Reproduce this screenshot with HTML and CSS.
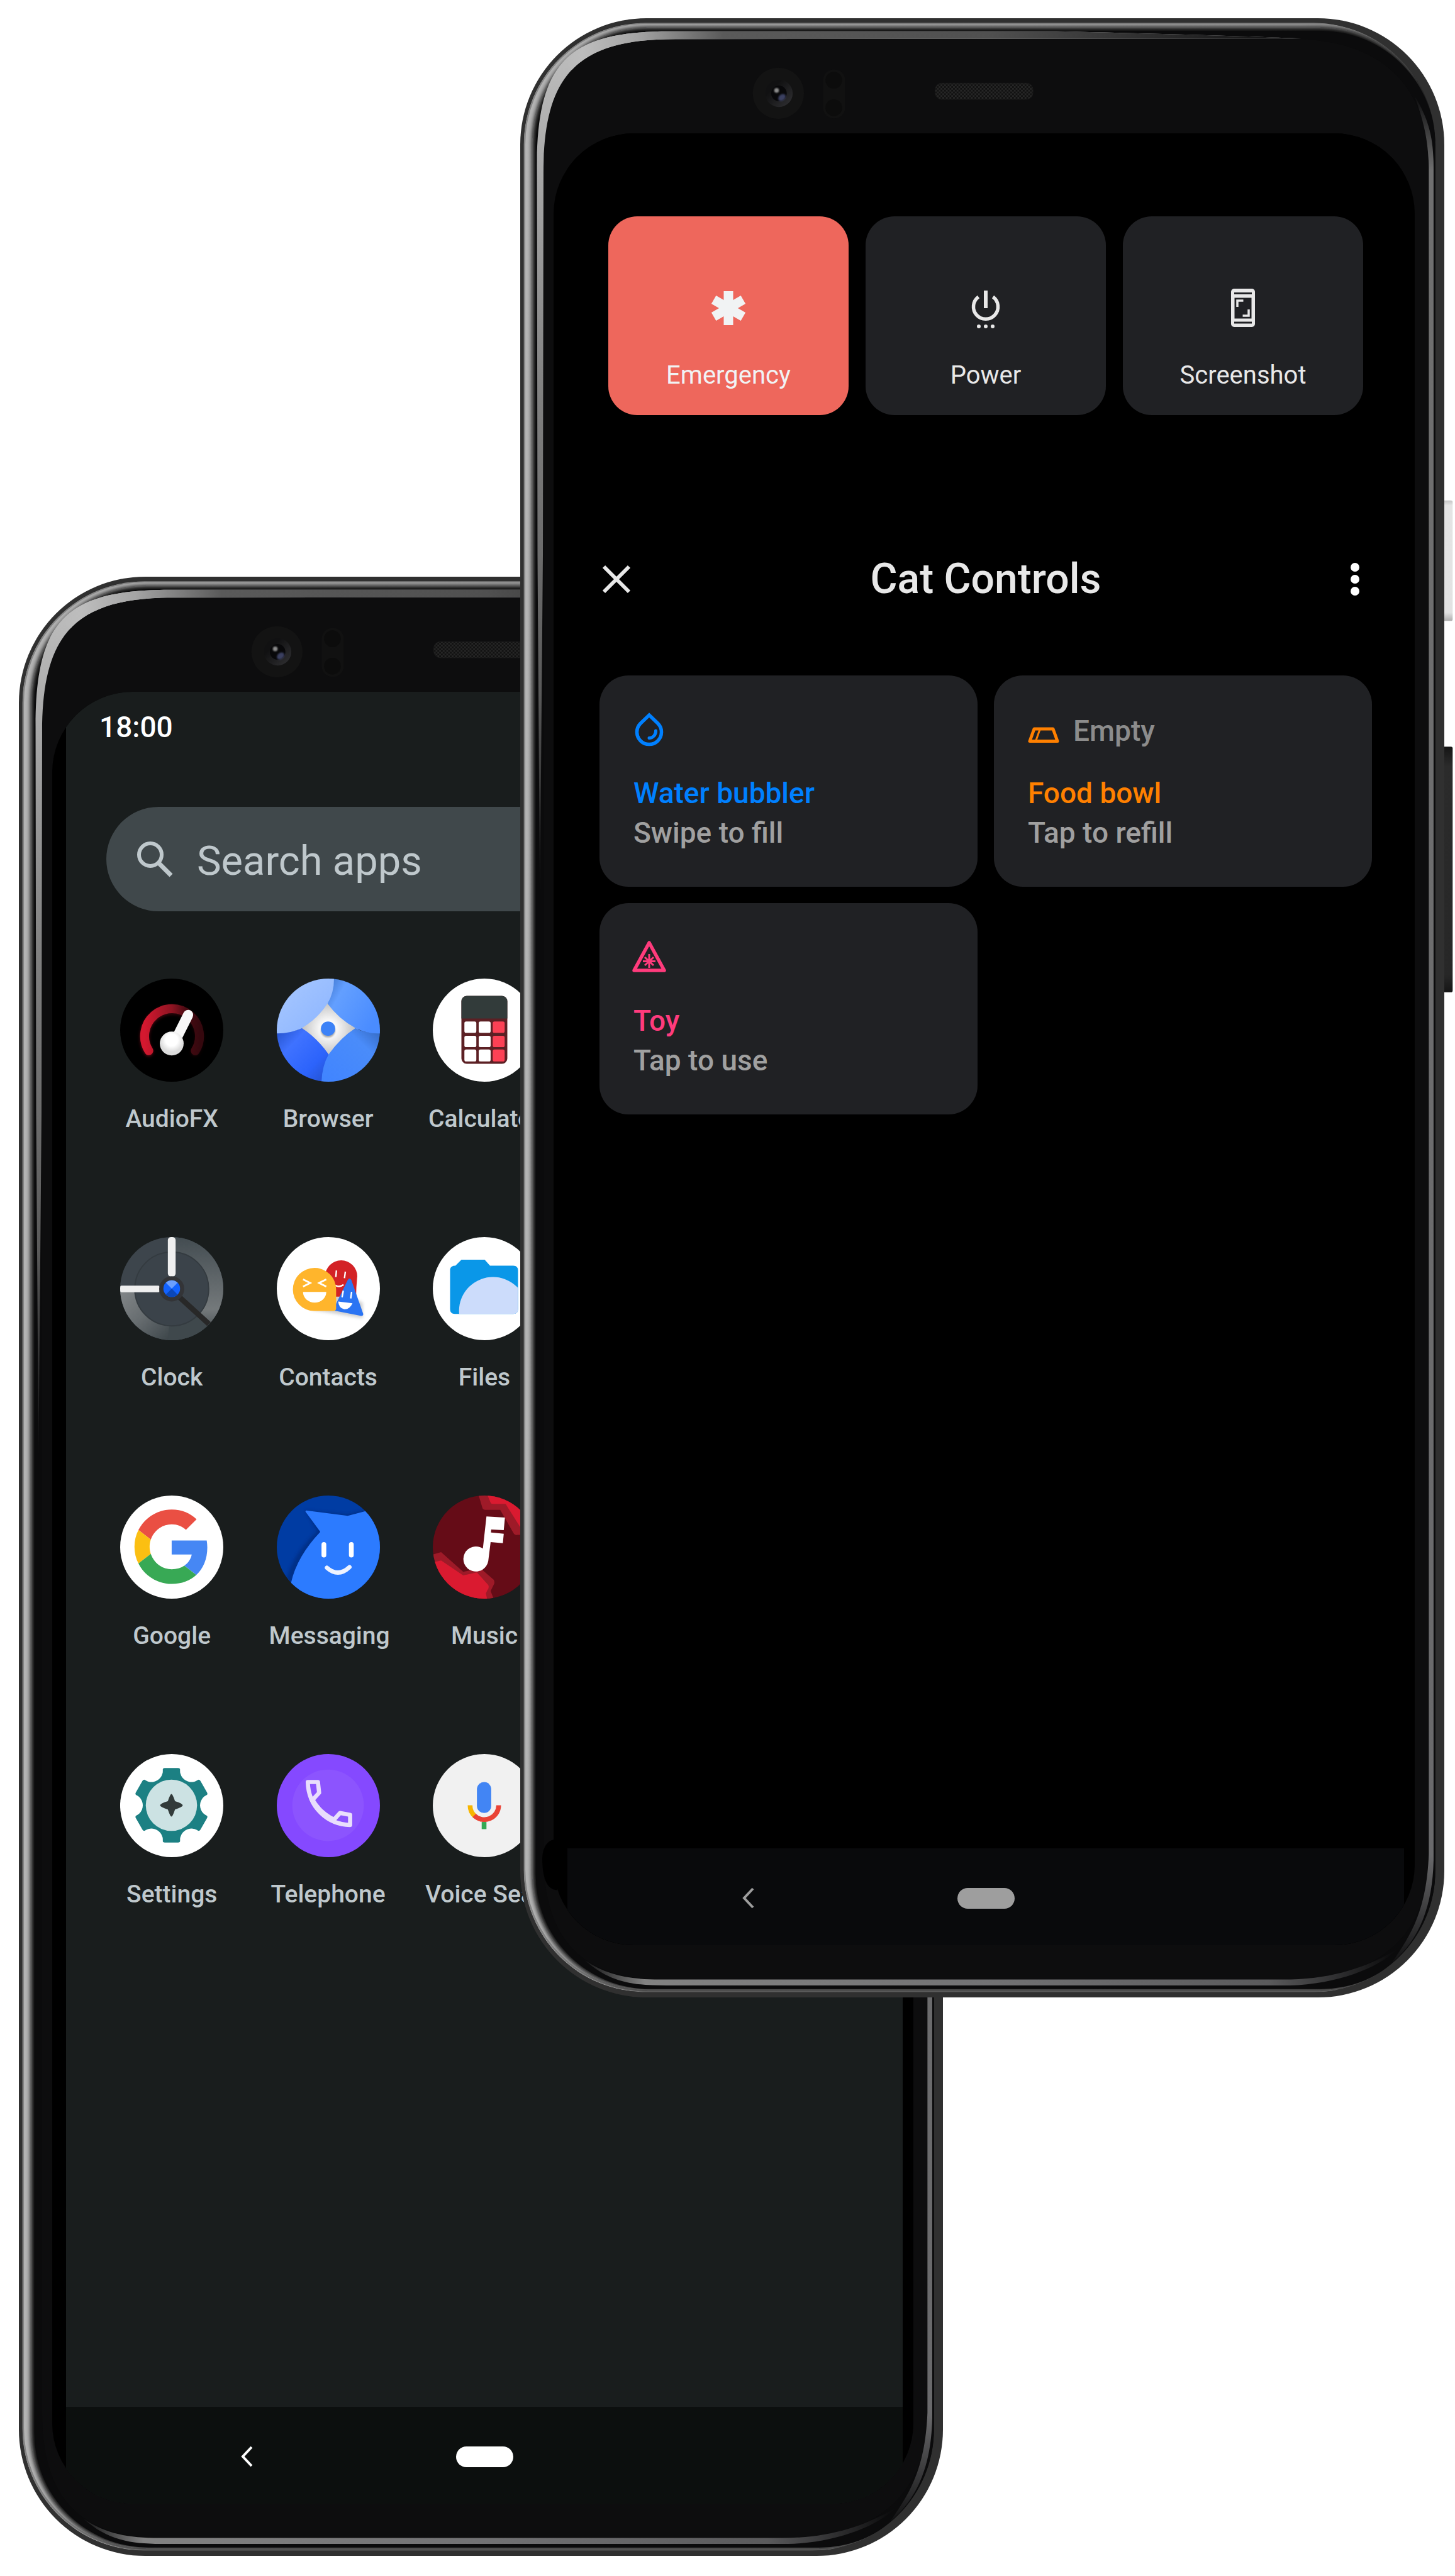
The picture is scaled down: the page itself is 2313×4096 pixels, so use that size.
FILE: index.html
```html
<!DOCTYPE html>
<html lang="en">
<head>
<meta charset="utf-8">
<meta name="viewport" content="width=device-width, initial-scale=1">
<title>Cat Controls</title>
<link rel="stylesheet" href="styles.css">
</head>
<body>
<svg class="defs" aria-hidden="true">
  <defs>
    <linearGradient id="rim" x1="0" x2="1" y1="0" y2="0">
      <stop offset="0" stop-color="#b4b4b4"/><stop offset=".85" stop-color="#9a9a9a"/><stop offset=".97" stop-color="#777"/><stop offset="1" stop-color="#0a0a0a"/>
    </linearGradient>
    <linearGradient id="sheenTop" gradientUnits="userSpaceOnUse" x1="0" y1="0" x2="1310" y2="0">
      <stop offset="0" stop-color="#b4b4b4"/><stop offset=".08" stop-color="#bdbdbd"/><stop offset=".15" stop-color="#a4a4a4"/><stop offset=".26" stop-color="#5a5a5a"/><stop offset=".6" stop-color="#505050"/><stop offset="1" stop-color="#0d0d0e"/>
    </linearGradient>
    <linearGradient id="sheenLeft" gradientUnits="userSpaceOnUse" x1="0" y1="80" x2="0" y2="1480">
      <stop offset="0" stop-color="#bababa"/><stop offset=".4" stop-color="#808080"/><stop offset=".75" stop-color="#5a5a5a"/><stop offset="1" stop-color="#0d0d0e"/>
    </linearGradient>
    <linearGradient id="sheenRight" gradientUnits="userSpaceOnUse" x1="0" y1="130" x2="0" y2="3270">
      <stop offset="0" stop-color="#0d0d0e"/><stop offset=".04" stop-color="#707070"/><stop offset=".94" stop-color="#6a6a6c"/><stop offset="1" stop-color="#0d0d0e"/>
    </linearGradient>
    <linearGradient id="sheenBottom" gradientUnits="userSpaceOnUse" x1="100" y1="0" x2="1460" y2="0">
      <stop offset="0" stop-color="#0d0d0e"/><stop offset=".08" stop-color="#828282"/><stop offset=".5" stop-color="#727274"/><stop offset=".85" stop-color="#5a5a5c"/><stop offset="1" stop-color="#0d0d0e"/>
    </linearGradient>
    <linearGradient id="lens" x1="0" y1="0" x2="1" y2="1"><stop offset=".3" stop-color="#111112"/><stop offset="1" stop-color="#323235"/></linearGradient>
    <pattern id="mesh" width="6" height="6" patternUnits="userSpaceOnUse"><rect width="6" height="6" fill="#111"/><rect width="3" height="3" fill="#262626"/><rect x="3" y="3" width="3" height="3" fill="#262626"/></pattern>
    <filter id="soft3" x="-5%" y="-5%" width="110%" height="110%"><feGaussianBlur stdDeviation="4"/></filter>
    <filter id="soft1" x="-20%" y="-20%" width="140%" height="140%"><feGaussianBlur stdDeviation="1"/></filter>
    <filter id="glow" x="-30%" y="-30%" width="160%" height="160%"><feGaussianBlur stdDeviation="3"/></filter>
    <clipPath id="rimClip"><rect x="6" y="8" width="1529" height="3303" rx="204"/></clipPath>
    <clipPath id="topHalf"><path d="M0 0H1400V120H120Z"/></clipPath>
    <clipPath id="disc"><circle cx="86.5" cy="86.5" r="86.5"/></clipPath>
    <path id="sheenShape" d="M33 1480 L29 900 28 250 C28 77 77 22 250 22 H900 Q1200 29 1310 34 L260 35 C95 35 39 95 39 260 L38 900Z"/>
    <symbol id="shell" viewBox="0 0 1550 3320" preserveAspectRatio="none">
      <rect width="1550" height="3320" rx="212" fill="#303030"/>
      <g clip-path="url(#rimClip)">
        <rect x="6" y="8" width="1529" height="3303" rx="204" fill="url(#rim)"/>
        <rect x="7" y="8" width="1600" height="3301" rx="204" fill="none" stroke="#858585" stroke-width="3"/>
        <rect x="20" y="15" width="1515" height="3293" rx="194" fill="#0a0a0b" filter="url(#soft3)"/>
        <rect x="26" y="21" width="1509" height="3285" rx="192" fill="#0b0b0c"/>
      </g>
      <path d="M39 260 C39 95 95 35 260 35 H1300 C1440 36 1524 110 1524 250 V3080 C1524 3215 1440 3290 1290 3290 H240 C100 3290 39 3220 39 3080Z" fill="#0d0d0e"/>
      <use href="#sheenShape" fill="url(#sheenLeft)"/>
      <use href="#sheenShape" fill="url(#sheenTop)" clip-path="url(#topHalf)"/>
      <path d="M1500 130 C1524 170 1532 200 1532 250 V3090 C1530 3180 1500 3230 1462 3262 C1490 3220 1520 3180 1524 3080 V250 C1523 200 1514 170 1500 130Z" fill="url(#sheenRight)"/>
      <path d="M109 3258 C150 3295 190 3300 245 3300 H1290 C1370 3298 1440 3270 1470 3240 C1410 3275 1350 3290 1280 3290 H235 C185 3290 145 3283 109 3258Z" fill="url(#sheenBottom)"/>
      <circle cx="433" cy="126" r="43" fill="#131313"/>
      <circle cx="434" cy="126" r="23" fill="url(#lens)"/>
      <circle cx="434" cy="126" r="13" fill="#08080a"/>
      <ellipse cx="439" cy="133" rx="7" ry="5" fill="#3b3f60" transform="rotate(-40 439 133)" filter="url(#soft1)"/>
      <circle cx="430" cy="121" r="4" fill="#8c8c8c" filter="url(#soft1)"/>
      <rect x="508" y="86" width="37" height="82" rx="18" fill="#111"/>
      <circle cx="526" cy="104" r="14" fill="#0c0c0c"/><circle cx="526" cy="150" r="14" fill="#0c0c0c"/>
      <rect x="696" y="109" width="164" height="27" rx="11" fill="url(#mesh)" stroke="#1c1c1c" stroke-width="1"/>
    </symbol>
  </defs>
</svg>

<main class="stage">
  <section class="phone phone-back">
    <svg class="shell" viewBox="0 0 1550 3320" preserveAspectRatio="none" aria-hidden="true"><use href="#shell" width="1550" height="3320"/></svg>
    <div class="glass">
      <div class="screen drawer">
        <div class="status"><time>18:00</time></div>
        <label class="search">
          <svg class="search-icon" viewBox="0 0 57 57" aria-hidden="true"><circle cx="21" cy="21" r="18" fill="none" stroke="currentColor" stroke-width="6"/><path d="M34 34 54 54" stroke="currentColor" stroke-width="7"/></svg>
          <input type="text" placeholder="Search apps">
        </label>
        <ul class="apps">
          <li><a class="app" href="#audiofx">
            <svg viewBox="0 0 173 173" aria-hidden="true">
              <defs><linearGradient id="fx"><stop offset="0" stop-color="#d4182f"/><stop offset=".5" stop-color="#8e1422"/><stop offset=".75" stop-color="#4a0a12"/><stop offset="1" stop-color="#35080e"/></linearGradient>
              <radialGradient id="knob" cy=".35"><stop offset=".5" stop-color="#fff"/><stop offset="1" stop-color="#dcdcdc"/></radialGradient></defs>
              <circle cx="86.500" cy="86.500" r="86.500" fill="#000"/>
              <path d="M48 123 A46 46 0 1 1 126 123" fill="none" stroke="url(#fx)" stroke-width="15" stroke-linecap="round" opacity=".4" filter="url(#glow)"/>
              <path d="M48 121 A46 46 0 1 1 126 121" fill="none" stroke="url(#fx)" stroke-width="15" stroke-linecap="round"/>
              <path d="M95 99 114 61" stroke="#f8f8f8" stroke-width="17" stroke-linecap="round"/>
              <circle cx="86.500" cy="109" r="20" fill="url(#knob)"/>
            </svg><span class="label">AudioFX</span></a></li>
          <li><a class="app" href="#browser">
            <svg viewBox="0 0 173 173" aria-hidden="true">
              <defs>
                <radialGradient id="br0"><stop offset=".2" stop-color="#fff"/><stop offset="1" stop-color="#b8b8b8"/></radialGradient>
                <linearGradient id="br1" x1="0" y1="0" x2="1" y2="1"><stop offset="0" stop-color="#a8c8ff"/><stop offset="1" stop-color="#8bb4ff"/></linearGradient>
                <linearGradient id="br2" x1="0" y1="0" x2="1" y2=".6"><stop offset="0" stop-color="#3d74cc"/><stop offset=".3" stop-color="#639fff"/><stop offset="1" stop-color="#4a8cff"/></linearGradient>
                <linearGradient id="br3" x1="0" y1="0" x2="1" y2="1"><stop offset="0" stop-color="#2350c8"/><stop offset=".3" stop-color="#3f72ff"/><stop offset=".7" stop-color="#2c63fb"/><stop offset="1" stop-color="#2450c9"/></linearGradient>
                <linearGradient id="br4" x1="1" y1="0" x2="0" y2="1"><stop offset="0" stop-color="#3367bd"/><stop offset=".3" stop-color="#4a8cfa"/><stop offset="1" stop-color="#4084ff"/></linearGradient>
              </defs>
              <g clip-path="url(#disc)">
                <circle cx="86.500" cy="84" r="50" fill="url(#br0)"/>
                <path d="M0 86 Q24 92 42 83 Q66 98 87 127 L76 173 H0Z" fill="url(#br3)"/>
                <path d="M173 88 Q152 94 132 83 Q108 98 87 127 Q76 146 75 173 H173Z" fill="url(#br4)"/>
                <path d="M90 0 V30 L85 42 Q104 68 132 83 Q152 93 173 92 V0Z" fill="url(#br2)"/>
                <path d="M96 0 Q96 24 85 42 Q68 68 42 83 Q24 92 0 92 V0Z" fill="url(#br1)"/>
              </g>
              <circle cx="86" cy="87" r="12" fill="#777" opacity=".6" filter="url(#soft1)"/><circle cx="86" cy="84" r="12" fill="#3c82f7"/>
            </svg><span class="label">Browser</span></a></li>
          <li><a class="app" href="#calculator">
            <svg viewBox="0 0 173 173" aria-hidden="true">
              <circle cx="86.500" cy="86.500" r="86.500" fill="#fff"/>
              <rect x="48" y="29" width="77" height="114" rx="9" fill="#5c2024"/>
              <path d="M48 67 V38 a9 9 0 0 1 9-9 H116 a9 9 0 0 1 9 9 V67Z" fill="#323b3a"/>
              <g fill="#fff"><rect x="53" y="72" width="20" height="19" rx="3"/><rect x="77" y="72" width="20" height="19" rx="3"/><rect x="53" y="96" width="20" height="19" rx="3"/><rect x="77" y="96" width="20" height="19" rx="3"/><rect x="53" y="119" width="20" height="20" rx="3"/><rect x="77" y="119" width="20" height="20" rx="3"/></g>
              <g fill="#fc4155"><rect x="100.500" y="72" width="20" height="19" rx="3"/><rect x="100.500" y="96" width="20" height="19" rx="3"/><rect x="100.500" y="119" width="20" height="20" rx="3"/></g>
            </svg><span class="label">Calculator</span></a></li>

          <li><a class="app" href="#clock">
            <svg viewBox="0 0 173 173" aria-hidden="true">
              <defs>
                <linearGradient id="ck1" x1="0" y1="0" x2="0" y2="1"><stop offset="0" stop-color="#434c51"/><stop offset=".7" stop-color="#74797b"/><stop offset="1" stop-color="#3a4347"/></linearGradient>
                <linearGradient id="ck2" x1="0" y1="0" x2="1" y2="1"><stop offset="0" stop-color="#84888a"/><stop offset=".5" stop-color="#666c6f"/><stop offset="1" stop-color="#3a4347"/></linearGradient>
              </defs>
              <g clip-path="url(#disc)">
                <rect width="173" height="173" fill="#3d454c"/>
                <rect x="86" width="87" height="173" fill="url(#ck1)"/>
                <path d="M0 86 H87 V173 H0Z" fill="url(#ck2)"/>
                <path d="M87 87 152 147 126 173 H80Z" fill="#3f484c"/>
                <circle cx="86.500" cy="87" r="62" fill="#3b434a" stroke="#343b40" stroke-width="2"/>
                <path d="M92 94 149 146" stroke="#282828" stroke-width="9"/>
                <path d="M86 0 V66" stroke="#222" stroke-width="15" opacity=".4" filter="url(#soft1)"/>
                <rect x="80" y="0" width="13" height="66" rx="5" fill="#efefef"/><rect x="0" y="81.500" width="66" height="11" rx="2" fill="#efefef"/>
              </g>
              <circle cx="86.500" cy="87" r="21" fill="#333437"/>
              <circle cx="86.500" cy="86.500" r="14" fill="#1262ff"/>
              <path d="M86.500 86.500 76.600 76.600 A14 14 0 0 1 96.400 76.600Z" fill="#6b9fff"/><path d="M86.500 86.500 76.600 96.400 A14 14 0 0 0 96.400 96.400Z" fill="#0b47b8"/>
            </svg><span class="label">Clock</span></a></li>
          <li><a class="app" href="#contacts">
            <svg viewBox="0 0 173 173" aria-hidden="true">
              <circle cx="86.500" cy="86.500" r="86.500" fill="#fff"/>
              <path d="M60 122 L144 136 V110 L100 90 30 100Z" fill="#777" opacity=".35" filter="url(#glow)"/>
              <path d="M81 66 a27 27 0 0 1 54 0 Q133 84 133 100 L96 100Z" fill="#d32226"/>
              <path d="M100 56 99 67 M115 58 113.500 69 M98 81 Q105 85 112 80" fill="none" stroke="#fff" stroke-width="2.500"/>
              <path d="M119 72 Q122 67 125 72 L145 129 Q145 133 141 132 L94 123Z" fill="#2b74f3"/>
              <path d="M111.500 90 109.500 101 M125.500 92 124 103" stroke="#fff" stroke-width="2.500"/>
              <path d="M103 108 127 111 Q122 122 113 121 Q104 119 103 108Z" fill="#fff"/>
              <path d="M27 88 a36 36 0 0 1 72.500 0 V120 Q99 124 95 124 H63 A36 36 0 0 1 27 88Z" fill="#ffb52c"/>
              <path d="M44 71 56 77 44 83 M83 71 71 77 83 83" fill="none" stroke="#fff" stroke-width="3"/>
              <path d="M44 92 H83 A19.500 18 0 0 1 44 92Z" fill="#fff"/>
            </svg><span class="label">Contacts</span></a></li>
          <li><a class="app" href="#files">
            <svg viewBox="0 0 173 173" aria-hidden="true">
              <defs><clipPath id="folder"><path id="folderShape" d="M29 54 Q30 48 38 48 L48 38 H87 L96 48 H135 Q143 48 143 56 V121 Q143 129 135 129 H37 Q29 129 29 121Z"/></clipPath></defs>
              <circle cx="86.500" cy="86.500" r="86.500" fill="#fff"/>
              <use href="#folderShape" fill="#0a97e8"/>
              <circle cx="101" cy="124" r="57" fill="#ccdcfb" clip-path="url(#folder)"/>
            </svg><span class="label">Files</span></a></li>

          <li><a class="app" href="#google">
            <svg viewBox="0 0 173 173" aria-hidden="true">
              <circle cx="86.500" cy="86.500" r="86.500" fill="#fff"/>
              <g transform="translate(24 23.500) scale(2.600)">
                <path fill="#ea4f43" d="M24 9.500c3.540 0 6.710 1.220 9.210 3.600l6.850-6.850C35.900 2.380 30.470 0 24 0 14.620 0 6.510 5.380 2.560 13.220l7.980 6.190C12.430 13.720 17.740 9.500 24 9.500z"/>
                <path fill="#4687f4" d="M46.980 24.550c0-1.570-.15-3.090-.38-4.550H24v9.020h12.940c-.58 2.960-2.260 5.480-4.780 7.180l7.730 6c4.510-4.180 7.090-10.360 7.090-17.650z"/>
                <path fill="#fbbf12" d="M10.530 28.590c-.48-1.450-.76-2.990-.76-4.590s.27-3.140.76-4.590l-7.980-6.190C.92 16.460 0 20.120 0 24c0 3.880.92 7.540 2.560 10.780l7.970-6.190z"/>
                <path fill="#38a955" d="M24 48c6.480 0 11.930-2.130 15.890-5.810l-7.730-6c-2.150 1.450-4.920 2.300-8.160 2.300-6.260 0-11.570-4.220-13.470-9.910l-7.980 6.190C6.510 42.620 14.620 48 24 48z"/>
              </g>
            </svg><span class="label">Google</span></a></li>
          <li><a class="app" href="#messaging">
            <svg viewBox="0 0 173 173" aria-hidden="true">
              <g clip-path="url(#disc)">
                <rect width="173" height="173" fill="#003ca3"/>
                <path d="M48 25 119 32 150 24 V60 H78 Q34 108 24 150 L16 140 Q30 94 68 60Z" fill="#002a7c" opacity=".7" filter="url(#glow)"/>
                <path d="M49 25 119 34 149 26 180 60 V173 H24 V146 Q34 102 73 61 L48 27Z" fill="#2c7bff"/>
              </g>
              <path d="M79 82 V100 M125 82 V100" stroke="#fff" stroke-width="8" stroke-linecap="round"/>
              <path d="M84 121 Q103 138 122 120" fill="none" stroke="#eef3ff" stroke-width="7" stroke-linecap="round"/>
            </svg><span class="label">Messaging</span></a></li>
          <li><a class="app" href="#music">
            <svg viewBox="0 0 173 173" aria-hidden="true">
              <g clip-path="url(#disc)">
                <rect width="173" height="173" fill="#650c17"/>
                <path d="M77 0 83 20 Q84 24 88 24 H113 L136 64 Q138 67 142 66 H173 V0Z" fill="#9e1a28"/>
                <path d="M92 0 97 12 Q98 14 101 14 H122 L146 52 173 70 V0Z" fill="#da1a30"/>
                <path d="M0 99 14 95 51 128 80 122 102 141 Q104 144 103 148 L97 160 102 173 H0Z" fill="#9e1a28"/>
                <path d="M0 112 14 109 51 134 74 129 93 150 Q95 154 92 158 L89 164 91 173 H0Z" fill="#da1a30"/>
              </g>
              <path d="M90 35 121 37 119 58 98 57 97.500 62 119 64 117.500 80 97 78 93 110 A21 21 0 1 1 84 89Z" fill="#fff"/>
            </svg><span class="label">Music</span></a></li>

          <li><a class="app" href="#settings">
            <svg viewBox="0 0 173 173" aria-hidden="true">
              <defs><g id="tooth"><rect x="-15" y="-62.500" width="30" height="40" rx="4"/></g><circle id="notch" cy="-67" r="19"/></defs>
              <circle cx="86.500" cy="86.500" r="86.500" fill="#fff"/>
              <g transform="translate(86 86)">
                <g fill="#1c8083"><circle r="56"/><use href="#tooth"/><use href="#tooth" transform="rotate(60)"/><use href="#tooth" transform="rotate(120)"/><use href="#tooth" transform="rotate(180)"/><use href="#tooth" transform="rotate(240)"/><use href="#tooth" transform="rotate(300)"/></g>
                <g fill="#fff"><use href="#notch" transform="rotate(30)"/><use href="#notch" transform="rotate(90)"/><use href="#notch" transform="rotate(150)"/><use href="#notch" transform="rotate(210)"/><use href="#notch" transform="rotate(270)"/><use href="#notch" transform="rotate(330)"/></g>
                <circle r="43" fill="#cce2e3"/>
                <path d="M0 -19 Q2 -19 6 -7 Q19 -3 19 0 Q19 3 6 7 Q2 19 0 19 Q-2 19 -6 7 Q-19 3 -19 0 Q-19 -3 -6 -7 Q-2 -19 0 -19Z" fill="#323b3a"/>
              </g>
            </svg><span class="label">Settings</span></a></li>
          <li><a class="app" href="#telephone">
            <svg viewBox="0 0 173 173" aria-hidden="true">
              <circle cx="86.500" cy="86.500" r="86.500" fill="#8549ff"/><circle cx="86" cy="86" r="60" fill="#8c54fe"/>
              <path d="M52 47 H69 L71 65 60 77 Q72 98 96 110 L106 99 123 102 V119 C84 118 53 88 52 47Z" fill="none" stroke="#e9defc" stroke-width="7" stroke-linejoin="round"/>
              <path d="M57 74 Q68 101 97 113" fill="none" stroke="#e9defc" stroke-width="6"/>
            </svg><span class="label">Telephone</span></a></li>
          <li><a class="app" href="#voice">
            <svg viewBox="0 0 173 173" aria-hidden="true">
              <circle cx="86.500" cy="86.500" r="86.500" fill="#f1f1f1"/>
              <rect x="74" y="47" width="24" height="52" rx="12" fill="#4285f4"/>
              <path d="M62.500 86 A24 24 0 0 0 71 104.500" fill="none" stroke="#f7b500" stroke-width="8"/>
              <path d="M69.500 103 A24 24 0 0 0 110.500 86" fill="none" stroke="#ea4335" stroke-width="8"/>
              <rect x="82" y="114" width="8" height="12" fill="#34a853"/>
            </svg><span class="label">Voice Search</span></a></li>
        </ul>
        <nav class="navbar">
          <button class="nav-back" aria-label="Back"><svg viewBox="0 0 20 34" aria-hidden="true"><path d="M18 2 4 17 18 32" fill="none" stroke="currentColor" stroke-width="4"/></svg></button>
          <button class="nav-home" aria-label="Home"></button>
        </nav>
      </div>
    </div>
  </section>

  <section class="phone phone-front">
    <svg class="shell" viewBox="0 0 1550 3320" preserveAspectRatio="none" aria-hidden="true">
      <defs>
        <linearGradient id="keyLight" x1="0" y1="0" x2="0" y2="1"><stop offset="0" stop-color="#c4c4c4"/><stop offset=".04" stop-color="#e4e4e4"/><stop offset=".93" stop-color="#e2e2e2"/><stop offset="1" stop-color="#adadad"/></linearGradient>
        <linearGradient id="keyDark" x1="0" y1="0" x2="0" y2="1"><stop offset="0" stop-color="#151515"/><stop offset=".08" stop-color="#2b2b2b"/><stop offset=".93" stop-color="#272727"/><stop offset="1" stop-color="#151515"/></linearGradient>
      </defs>
      <rect x="1540" y="809" width="24" height="202" rx="3" fill="url(#keyLight)"/>
      <rect x="1540" y="1222" width="24" height="412" rx="3" fill="url(#keyDark)"/>
      <use href="#shell" width="1550" height="3320"/>
      <path d="M60 3055 C45 3055 37 3070 37 3088 C37 3120 45 3140 62 3140Z" fill="#000"/>
    </svg>
    <div class="glass">
      <div class="screen controls">
        <div class="power-row">
          <button class="power-card emergency">
            <svg viewBox="0 0 64 64" aria-hidden="true"><g fill="#f1f3f4" transform="translate(32 32)"><rect x="-7.500" y="-27" width="15" height="54"/><rect x="-7.500" y="-27" width="15" height="54" transform="rotate(60)"/><rect x="-7.500" y="-27" width="15" height="54" transform="rotate(120)"/></g></svg>
            <span>Emergency</span></button>
          <button class="power-card">
            <svg viewBox="0 0 64 64" aria-hidden="true"><path d="M20.500 14 A19.500 19.500 0 1 0 43.500 14" fill="none" stroke="currentColor" stroke-width="5.500"/><path d="M32 4 V32" stroke="currentColor" stroke-width="6"/><g fill="currentColor"><circle cx="21" cy="61" r="3"/><circle cx="32" cy="61" r="3"/><circle cx="43" cy="61" r="3"/></g></svg>
            <span>Power</span></button>
          <button class="power-card">
            <svg viewBox="0 0 64 64" aria-hidden="true"><rect x="13" y="1" width="38" height="61" rx="5" fill="currentColor"/><path d="M18 8.500 H46 M18 55 H46" stroke="#202124" stroke-width="3"/><rect x="18.500" y="15.500" width="27" height="33" fill="#202124"/><path d="M23 30 V20 H32.500 M41 34 V44 H31.500" fill="none" stroke="currentColor" stroke-width="3.500"/></svg>
            <span>Screenshot</span></button>
        </div>
        <header class="head">
          <button class="icon-btn" aria-label="Close"><svg viewBox="0 0 44 44" aria-hidden="true"><path d="M2 2 42 42 M42 2 2 42" stroke="#e8e8e8" stroke-width="6"/></svg></button>
          <h1>Cat Controls</h1>
          <button class="icon-btn" aria-label="More"><svg viewBox="0 0 44 44" aria-hidden="true"><g fill="#fff"><circle cx="22" cy="3" r="7"/><circle cx="22" cy="22" r="7"/><circle cx="22" cy="41" r="7"/></g></svg></button>
        </header>
        <div class="tiles">
          <button class="tile water">
            <span class="tile-top"><svg viewBox="0 0 50 54" aria-hidden="true"><path d="M25 2 39 15.500 A19.500 19.500 0 1 1 11 15.500Z" fill="none" stroke="currentColor" stroke-width="5.500"/><path d="M35.500 27 A10.500 11 0 0 1 25 38.500" fill="none" stroke="currentColor" stroke-width="5" stroke-linecap="round"/></svg></span>
            <strong>Water bubbler</strong><span>Swipe to fill</span></button>
          <button class="tile food">
            <span class="tile-top"><svg viewBox="0 0 50 54" aria-hidden="true"><path d="M3 43.500 H47 L40 24 H10Z" fill="none" stroke="currentColor" stroke-width="5" stroke-linejoin="round"/><path d="M19 25 13 42" stroke="currentColor" stroke-width="3"/></svg><em>Empty</em></span>
            <strong>Food bowl</strong><span>Tap to refill</span></button>
          <button class="tile toy">
            <span class="tile-top"><svg viewBox="0 0 50 54" aria-hidden="true"><path d="M25 2 49 46 H1Z" fill="none" stroke="currentColor" stroke-width="5.500" stroke-linejoin="round"/><path d="M25 20 V42 M15 31.500 H35 M18 25 32 38 M32 25 18 38" stroke="currentColor" stroke-width="3"/></svg></span>
            <strong>Toy</strong><span>Tap to use</span></button>
        </div>
        <nav class="navbar">
          <button class="nav-back" aria-label="Back"><svg viewBox="0 0 20 34" aria-hidden="true"><path d="M18 2 4 17 18 32" fill="none" stroke="currentColor" stroke-width="4"/></svg></button>
          <button class="nav-home" aria-label="Home"></button>
        </nav>
      </div>
    </div>
  </section>
</main>
</body>
</html>
```
FILE: styles.css
```css
* {
  box-sizing: border-box;
}

body {
  margin: 0;
  background: #fff;
  font-family: Roboto, "Noto Sans", sans-serif;
}

button {
  margin: 0;
  padding: 0;
  border: 0;
  background: none;
  color: inherit;
  font: inherit;
  text-align: inherit;
}

svg {
  display: block;
  overflow: visible;
}

.defs {
  position: absolute;
  width: 0;
  height: 0;
}

/* Two phones share a three-column grid and overlap in the middle column */
.stage {
  display: grid;
  grid-template-columns: 797fr 672fr 797fr;
  padding: 29px 17px 32px 30px;
  overflow: hidden;
}

.phone {
  position: relative;
  display: flex;
  grid-row: 1;
  align-self: start;
  aspect-ratio: 1469 / 3147;
  padding: 183px 47px 83px 53px;
}

.phone-back {
  grid-column: 1 / 3;
  margin-top: 888px;
}

.phone-front {
  grid-column: 2 / 4;
}

.shell {
  position: absolute;
  inset: 0;
  width: 100%;
  height: 100%;
}

.glass {
  position: relative;
  display: flex;
  flex: 1;
  padding: 0 17px 0 22px;
  border-radius: 128px;
  background: #000;
  overflow: hidden;
}

.screen {
  display: flex;
  flex: 1;
  flex-direction: column;
  min-width: 0;
}

/* App drawer */
.drawer {
  background: #191d1d;
  color: #fff;
}

.status {
  padding: 29px 53px 0;
  font-size: 46px;
  font-weight: 500;
  line-height: 54px;
}

.search {
  display: flex;
  align-items: center;
  gap: 38px;
  height: 166px;
  margin: 100px 64px 0;
  padding: 0 49px;
  border-radius: 83px;
  background: #40484b;
  color: #bfc8cc;
}

.search-icon {
  flex: none;
  width: 57px;
  height: 57px;
}

.search input {
  flex: 1;
  min-width: 0;
  padding: 6px 0 0;
  border: 0;
  outline: 0;
  background: none;
  color: inherit;
  font: 400 65px/80px Roboto, "Noto Sans", sans-serif;
}

.search input::placeholder {
  color: inherit;
  opacity: 1;
}

.apps {
  display: grid;
  grid-template-columns: repeat(5, 1fr);
  row-gap: 164px;
  margin: 107px 44px 0;
  padding: 0;
  list-style: none;
}

.apps li:nth-child(3n + 1) {
  grid-column: 1;
}

.app {
  display: flex;
  flex-direction: column;
  align-items: center;
  gap: 35px;
  color: #bfc8cc;
  text-decoration: none;
}

.app svg {
  width: 164px;
  height: 164px;
}

.label {
  width: 188px;
  font-size: 39px;
  font-weight: 500;
  line-height: 48px;
  text-align: center;
  white-space: nowrap;
}

/* System navigation bar */
.navbar {
  display: grid;
  grid-template-columns: 1fr 91px 1fr;
  align-items: center;
  height: 154px;
  margin-top: auto;
  padding-top: 4px;
  background: #0c0f0e;
}

.nav-back {
  justify-self: center;
  margin-right: 46px;
}

.nav-back svg {
  width: 20px;
  height: 34px;
}

.nav-home {
  height: 33px;
  border-radius: 17px;
  background: currentColor;
}

/* Power menu with device controls */
.controls {
  background: #000;
  color: #e8e8e8;
}

.controls .navbar {
  background: #090a0c;
  color: #9e9e9e;
}

.power-row {
  display: grid;
  grid-template-columns: repeat(3, 1fr);
  gap: 27px;
  margin: 132px 65px 0;
}

.power-card {
  display: flex;
  flex-direction: column;
  align-items: center;
  gap: 52px;
  padding: 114px 0 40px;
  border-radius: 46px;
  background: #202124;
  font-size: 40px;
  line-height: 46px;
}

.power-card svg {
  width: 64px;
  height: 64px;
}

.emergency {
  background: #ee675c;
  color: #f1f3f4;
}

.head {
  display: flex;
  align-items: center;
  justify-content: space-between;
  margin: 223px 56px 0;
}

.head h1 {
  margin: 0;
  font-size: 66px;
  font-weight: 500;
  line-height: 76px;
}

.icon-btn svg {
  width: 44px;
  height: 44px;
}

.tiles {
  display: grid;
  grid-template-columns: repeat(2, 1fr);
  gap: 26px;
  margin: 115px 51px 0;
}

.tile {
  display: flex;
  flex-direction: column;
  padding: 61px 54px 54px;
  border-radius: 46px;
  background: #202124;
  color: #a0a0a0;
  font-size: 46px;
  font-weight: 500;
  line-height: 63px;
}

.tile-top {
  display: flex;
  gap: 22px;
  height: 54px;
  margin-bottom: 41px;
  line-height: 54px;
}

.tile-top svg {
  width: 50px;
  height: 54px;
}

.tile-top em {
  color: #8c8c8c;
  font-style: normal;
}

.tile strong {
  font-weight: 500;
}

.water strong,
.water svg {
  color: #0080ff;
}

.food strong,
.food svg {
  color: #ff8000;
}

.toy strong,
.toy svg {
  color: #ff3b7c;
}
```
